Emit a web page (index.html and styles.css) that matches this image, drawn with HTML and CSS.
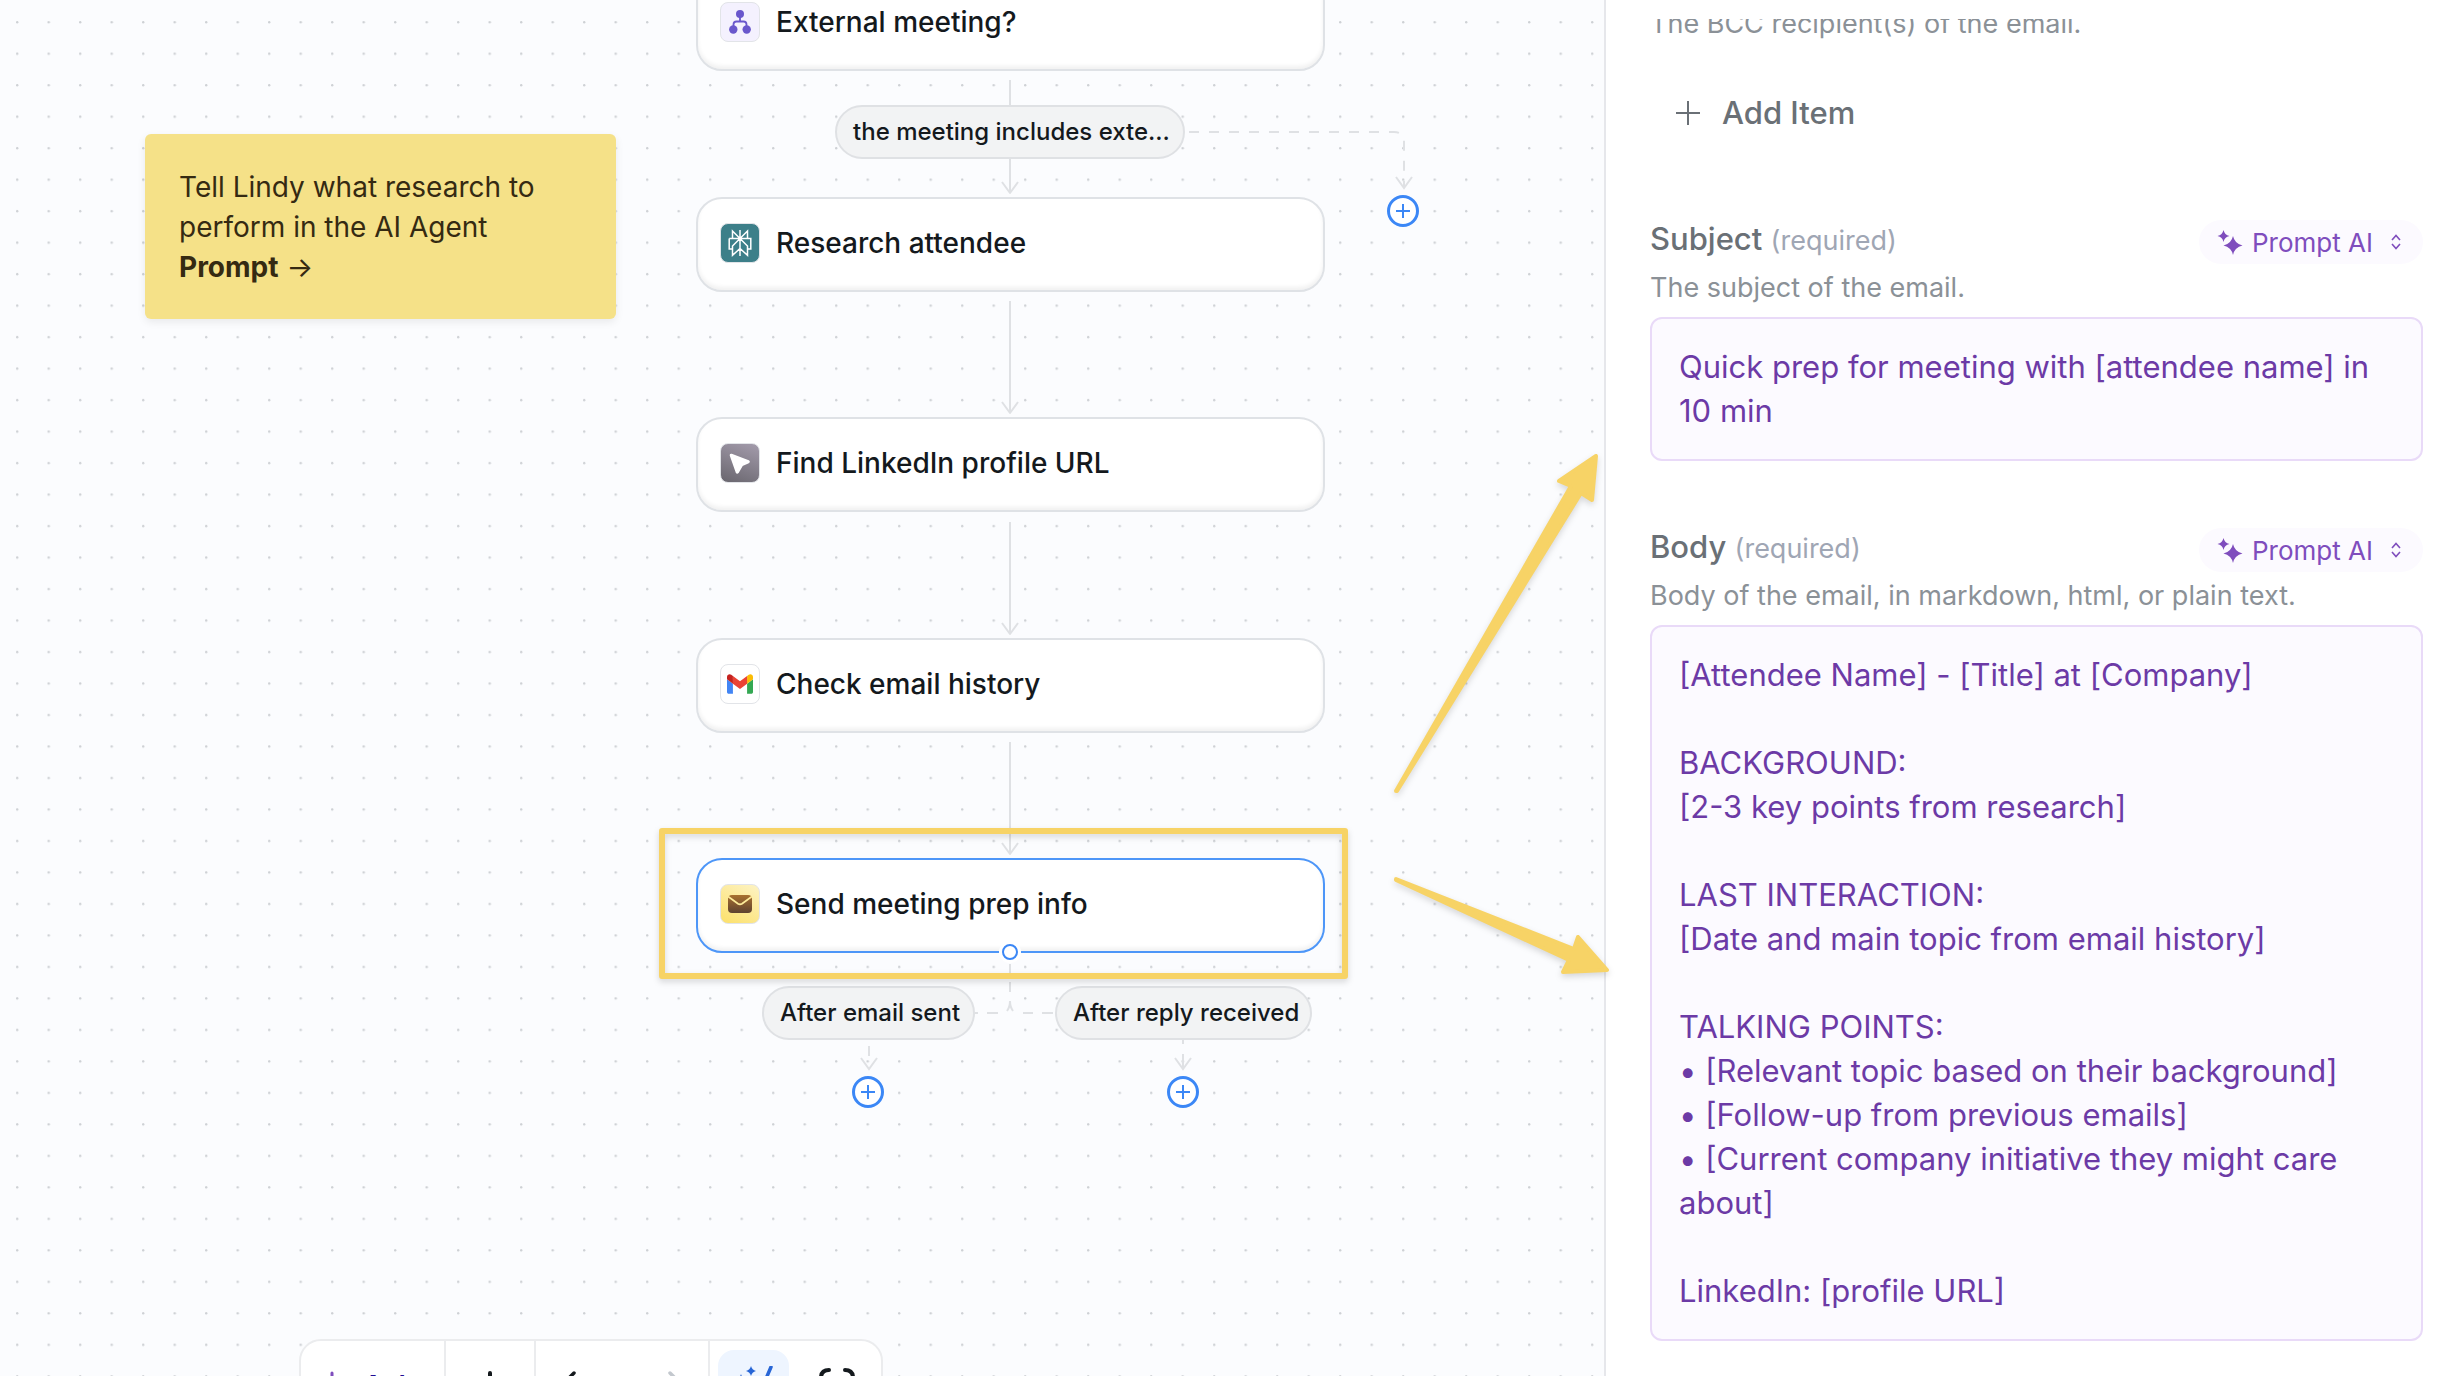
FILE: index.html
```html
<!DOCTYPE html>
<html lang="en">
<head>
<meta charset="utf-8">
<title>Meeting prep workflow</title>
<link rel="stylesheet" href="styles.css">
</head>
<body>
<div class="workspace">
  <main class="canvas">
    <svg class="layer" aria-hidden="true">
      <defs>
        <pattern id="dots" x="16" y="21" width="31.5" height="31.49" patternUnits="userSpaceOnUse">
          <circle cx="1.2" cy="1.2" r="1.2" fill="#cdd0d4"/>
        </pattern>
      </defs>
      <rect width="100%" height="100%" fill="url(#dots)"/>
      <g fill="none" stroke="#dfe1e4" stroke-width="2">
        <path d="M1010 80V193M1010 301V413M1010 522V634M1010 742V854"/>
        <path d="M1002 182l8 11 8-11M1002 402l8 11 8-11M1002 623l8 11 8-11M1002 843l8 11 8-11" stroke-linejoin="round"/>
        <path d="M1189 132H1394Q1404 132 1404 142V187" stroke="#dfe1e4" stroke-dasharray="10 10"/>
        <path d="M1396 177l8 11 8-11M861 1058l8 11 8-11M1175 1058l8 11 8-11" stroke="#dfe1e4"/>
        <path d="M1010 964v9M1010 982v10M1010 1001q0 6-3 10M1010 1001q0 6 3 10M975 1013h3M987 1013h11M1023 1013h10M1042 1013h11M869 1046v10M1183 1040v4M1183 1054v14" stroke="#dfe1e4"/>
      </g>
    </svg>

    <aside class="note">Tell Lindy what research to perform in the AI Agent <strong>Prompt</strong> →</aside>

    <section class="node node-condition">
      <span class="tile tile-branch"><svg width="22" height="24" viewBox="0 0 22 24"><g fill="none" stroke="#6957cc" stroke-width="1.8"><path d="M11 5v6M4.500 18v-3.500Q4.500 11.500 7.500 11.500h7Q17.500 11.500 17.500 14.500V18"/></g><g fill="#6957cc"><circle cx="11" cy="4" r="4"/><circle cx="4.300" cy="19.500" r="4.200"/><circle cx="17.700" cy="19.500" r="4.200"/></g></svg></span>
      <span>External meeting?</span>
    </section>
    <section class="node node-research">
      <span class="tile tile-research"><svg width="24" height="28" viewBox="0 0 24 28" fill="none" stroke="#fff" stroke-width="1.500"><path d="M12 1v26M12 9.500L4.500 2v7.500M12 9.500L19.500 2v7.500M1.200 9.500h21.600v10.500h-3.300M1.200 9.500v10.500h3.300M12 9.500L4.500 17v9.300L12 19.500l7.500 6.800V17z"/></svg></span>
      <span>Research attendee</span>
    </section>
    <section class="node node-linkedin">
      <span class="tile tile-agent"><svg width="24" height="24" viewBox="0 0 24 24"><path d="M3.500 3.500L20.500 10q1.200.7 0 1.500l-6.300 2.800-4.200 7.200q-.8 1-1.500 0L2.500 4.500q-.2-1.200 1-1z" fill="#fff" stroke="#fff" stroke-width="1.500" stroke-linejoin="round"/></svg></span>
      <span>Find LinkedIn profile URL</span>
    </section>
    <section class="node node-history">
      <span class="tile tile-gmail"><svg width="26" height="20" viewBox="52 42 88 66"><path fill="#4285f4" d="M58 108h14V74L52 59v43c0 3.320 2.690 6 6 6"/><path fill="#34a853" d="M120 108h14c3.320 0 6-2.690 6-6V59l-20 15"/><path fill="#fbbc04" d="M120 48v26l20-15v-8c0-7.420-8.470-11.650-14.400-7.200"/><path fill="#ea4335" d="M72 74V48l24 18 24-18v26L96 92"/><path fill="#c5221f" d="M52 51v8l20 15V48l-5.600-4.200c-5.940-4.450-14.400-.22-14.400 7.200"/></svg></span>
      <span>Check email history</span>
    </section>
    <section class="node node-send">
      <span class="tile tile-mail"><svg width="24" height="18" viewBox="0 0 24 18"><defs><linearGradient id="env" x1="0" y1="0" x2="0" y2="1"><stop offset="0" stop-color="#a8702f"/><stop offset="1" stop-color="#5e4230"/></linearGradient></defs><rect width="24" height="18" rx="4" fill="url(#env)"/><path d="M0 1.500l10 7.200q2 1.300 4 0L24 1.500" fill="none" stroke="#fdeb9a" stroke-width="1.800"/></svg></span>
      <span>Send meeting prep info</span>
    </section>
    <span class="port"></span>

    <span class="pill pill-external">the meeting includes exte...</span>
    <span class="pill pill-sent">After email sent</span>
    <span class="pill pill-reply">After reply received</span>

    <button class="add add-else" aria-label="Add step"><svg width="16" height="16" viewBox="0 0 16 16"><path d="M8 1v14M1 8h14" stroke="#3b87f6" stroke-width="2"/></svg></button>
    <button class="add add-sent" aria-label="Add step"><svg width="16" height="16" viewBox="0 0 16 16"><path d="M8 1v14M1 8h14" stroke="#3b87f6" stroke-width="2"/></svg></button>
    <button class="add add-reply" aria-label="Add step"><svg width="16" height="16" viewBox="0 0 16 16"><path d="M8 1v14M1 8h14" stroke="#3b87f6" stroke-width="2"/></svg></button>

    <div class="highlight"></div>

    <div class="toolbar">
      <button class="tool tool-ask"><svg width="24" height="30" viewBox="0 0 24 30"><path d="M12 2v26M2 15h20" stroke="#7f4dbd" stroke-width="3" stroke-linecap="round"/></svg>Ask</button>
      <button class="tool tool-new" aria-label="Add"><svg width="30" height="30" viewBox="0 0 30 30"><path d="M15 2v26M2 15h26" stroke="#14191d" stroke-width="4" stroke-linecap="round"/></svg></button>
      <div class="tool-group history">
        <button class="tool" aria-label="Undo"><svg width="30" height="30" viewBox="0 0 30 30" fill="none" stroke="#14191d" stroke-width="3.500" stroke-linecap="round"><path d="M11 2L3 10l8 8M3 10h15a8 8 0 0 1 0 16h-5"/></svg></button>
        <button class="tool" aria-label="Redo" disabled><svg width="30" height="30" viewBox="0 0 30 30" fill="none" stroke="#c3c8ce" stroke-width="3.500" stroke-linecap="round"><path d="M19 2l8 8-8 8M27 10H12a8 8 0 0 0 0 16h5"/></svg></button>
      </div>
      <div class="tool-group view">
        <button class="tool active" aria-label="Tidy up"><svg width="40" height="40" viewBox="0 0 40 40"><path d="M17 0q1 4 5 5-4 1-5 5-1-4-5-5 4-1 5-5zM7 8q1 4 5 5-4 1-5 5-1-4-5-5 4-1 5-5z" fill="#2866d6"/><path d="M37 1L25 29" stroke="#2866d6" stroke-width="3.500" stroke-linecap="round"/></svg></button>
        <button class="tool" aria-label="Fit view"><svg width="40" height="40" viewBox="0 0 40 40" fill="none" stroke="#14191d" stroke-width="4" stroke-linecap="round"><path d="M12 4q-8 0-8 8M28 4q8 0 8 8M12 36q-8 0-8-8M28 36q8 0 8-8"/></svg></button>
      </div>
    </div>
  </main>

  <aside class="panel">
    <form class="scroll">
      <p class="help bcc">The BCC recipient(s) of the email.</p>
      <button type="button" class="add-item"><svg width="24" height="24" viewBox="0 0 24 24"><path d="M12 0v24M0 12h24" stroke="#6a7076" stroke-width="2"/></svg>Add Item</button>

      <div class="field">
        <div class="field-head">
          <label for="subject">Subject <small>(required)</small></label>
          <button type="button" class="chip"><svg width="26" height="26" viewBox="0 0 26 26"><path d="M6.500 1q1 4.800 6 6-5 1.200-6 6-1-4.800-6-6 5-1.200 6-6zM16 7q1.600 7.600 9.500 9.500-7.900 1.900-9.500 9.500-1.600-7.600-9.500-9.500 7.900-1.900 9.500-9.500z" fill="#7f4dbd"/></svg><span>Prompt AI</span><svg class="carets" width="10" height="16" viewBox="0 0 10 16" fill="none" stroke="#7f4dbd" stroke-width="1.600"><path d="M1 6l4-4.500L9 6M1 10l4 4.500L9 10"/></svg></button>
        </div>
        <p class="help">The subject of the email.</p>
        <textarea id="subject" rows="2" spellcheck="false">Quick prep for meeting with [attendee name] in 10 min</textarea>
      </div>

      <div class="field">
        <div class="field-head">
          <label for="body">Body <small>(required)</small></label>
          <button type="button" class="chip"><svg width="26" height="26" viewBox="0 0 26 26"><path d="M6.500 1q1 4.800 6 6-5 1.200-6 6-1-4.800-6-6 5-1.200 6-6zM16 7q1.600 7.600 9.500 9.500-7.900 1.900-9.500 9.500-1.600-7.600-9.500-9.500 7.900-1.900 9.500-9.500z" fill="#7f4dbd"/></svg><span>Prompt AI</span><svg class="carets" width="10" height="16" viewBox="0 0 10 16" fill="none" stroke="#7f4dbd" stroke-width="1.600"><path d="M1 6l4-4.500L9 6M1 10l4 4.500L9 10"/></svg></button>
        </div>
        <p class="help">Body of the email, in markdown, html, or plain text.</p>
        <textarea id="body" rows="15" spellcheck="false">[Attendee Name] - [Title] at [Company]

BACKGROUND:
[2-3 key points from research]

LAST INTERACTION:
[Date and main topic from email history]

TALKING POINTS:
• [Relevant topic based on their background]
• [Follow-up from previous emails]
• [Current company initiative they might care about]

LinkedIn: [profile URL]</textarea>
      </div>
    </form>
  </aside>

  <svg class="layer arrows" aria-hidden="true">
    <g fill="#f7d366" stroke="#f7d366" stroke-width="4" stroke-linejoin="round">
      <path d="M1396 791L1571 486 1559 481 1596 456 1592 500 1581 493 1397 791z"/>
      <path d="M1396 879L1574 949 1578 937 1607 970 1563 972 1569 960 1396 880z"/>
    </g>
  </svg>
</div>
</body>
</html>
```
FILE: styles.css
```css
* { box-sizing: border-box; }

body {
  margin: 0;
  font-family: Inter, "Liberation Sans", sans-serif;
  color: #14191d;
  background: #fff;
}

button, textarea { font: inherit; }
button { border: 0; background: none; padding: 0; cursor: pointer; }
p { margin: 0; }
svg { display: block; flex: none; }

.workspace {
  position: relative;
  display: grid;
  grid-template-columns: minmax(0, 1fr) 844px;
  height: 100vh;
  overflow: hidden;
}

/* Canvas */
.canvas {
  position: relative;
  overflow: hidden;
  background: #fbfcfe;
}

.layer {
  position: absolute;
  inset: 0;
  width: 100%;
  height: 100%;
  pointer-events: none;
}

.arrows { filter: drop-shadow(0 3px 3px rgba(0, 0, 0, 0.15)); }

.note {
  position: absolute;
  left: 145px;
  top: 134px;
  width: 471px;
  padding: 33px 34px 32px;
  font-size: 28px;
  line-height: 40px;
  color: #352a12;
  background: #f5e188;
  border-radius: 6px;
  box-shadow: 0 3px 8px rgba(0, 0, 0, 0.08);
}

.node {
  position: absolute;
  left: 696px;
  width: 629px;
  height: 95px;
  display: flex;
  align-items: center;
  gap: 16px;
  padding: 0 22px 4px;
  font-size: 28px;
  line-height: 40px;
  font-weight: 500;
  background: #fff;
  border: 2px solid #dfe2e6;
  border-radius: 26px;
  box-shadow: inset 0 -3px 4px rgba(0, 0, 0, 0.06);
}

.node-condition { top: -24px; }
.node-research { top: 197px; }
.node-linkedin { top: 417px; }
.node-history { top: 638px; }
.node-send { top: 858px; border-color: #4d96f8; }

.tile {
  flex: none;
  display: grid;
  place-items: center;
  width: 40px;
  height: 40px;
  border: 1px solid #e2e4e8;
  border-radius: 8px;
  background: #fff;
}

.tile-branch { background: #f4f1fe; }
.tile-research { background: #3d7f89; }
.tile-agent { background: linear-gradient(20deg, #69666e, #a49cac); }
.tile-mail { background: linear-gradient(30deg, #fce06a, #fdf3c4); }

.port {
  position: absolute;
  left: 1002px;
  top: 944px;
  width: 16px;
  height: 16px;
  border: 2px solid #3b87f6;
  border-radius: 50%;
  background: #fff;
  box-shadow: 0 0 0 3px #fff;
}

.pill {
  position: absolute;
  padding: 7px 16px;
  font-size: 24px;
  line-height: 36px;
  font-weight: 500;
  white-space: nowrap;
  text-align: center;
  background: #f2f3f4;
  border: 2px solid #dfe1e4;
  border-radius: 27px;
}

.pill-external { left: 835px; top: 105px; width: 350px; }
.pill-sent { left: 762px; top: 986px; width: 213px; }
.pill-reply { left: 1055px; top: 986px; width: 257px; }

.add {
  position: absolute;
  display: grid;
  place-items: center;
  width: 32px;
  height: 32px;
  border: 3px solid #3b87f6;
  border-radius: 50%;
  background: #fff;
}

.add-else { left: 1387px; top: 195px; }
.add-sent { left: 852px; top: 1076px; }
.add-reply { left: 1167px; top: 1076px; }

.highlight {
  position: absolute;
  left: 659px;
  top: 828px;
  width: 689px;
  height: 151px;
  border: 6px solid #f7d366;
  border-radius: 3px;
  filter: drop-shadow(0 3px 3px rgba(0, 0, 0, 0.15));
}

/* Toolbar hangs over the bottom edge of the canvas */
.toolbar {
  position: absolute;
  left: 299px;
  bottom: -56px;
  display: flex;
  width: 584px;
  height: 93px;
  background: #fff;
  border: 2px solid #ebecee;
  border-radius: 22px;
}

.tool {
  display: flex;
  align-items: center;
  justify-content: center;
  color: #1f0c94;
  font-size: 28px;
  font-weight: 600;
}

.tool-ask {
  justify-content: flex-start;
  gap: 19px;
  width: 145px;
  padding-left: 19px;
  border-right: 2px solid #ebecee;
}
.tool-new { width: 90px; border-right: 2px solid #ebecee; }
.tool-group { display: flex; align-items: center; }
.history { width: 174px; justify-content: space-between; padding: 0 27px; border-right: 2px solid #ebecee; }
.view { flex: 1; gap: 28px; padding-left: 8px; }
.active { width: 71px; height: 71px; border-radius: 16px; background: #eef5ff; }

/* Settings panel */
.panel {
  padding: 19px 25px 0 44px;
  background: #fff;
  border-left: 2px solid #e6e7eb;
  font-optical-sizing: none;
}

.scroll {
  height: 100%;
  overflow: hidden;
}

.help {
  font-size: 27px;
  line-height: 32px;
  color: #8b9197;
}

.bcc { margin-top: -11px; }

.add-item {
  display: flex;
  align-items: center;
  gap: 22px;
  margin-top: 51px;
  padding-left: 26px;
  font-size: 31px;
  line-height: 44px;
  font-weight: 500;
  color: #6a7076;
}

.field { margin-top: 67px; }
.add-item + .field { margin-top: 85px; }

.field-head {
  display: flex;
  justify-content: space-between;
  align-items: flex-start;
  margin-bottom: 8px;
}

.field-head label {
  font-size: 31px;
  line-height: 38px;
  font-weight: 500;
  color: #6a7076;
}

.field-head small {
  font-size: 27px;
  font-weight: 400;
  color: #9fa6b4;
}

.chip {
  display: flex;
  align-items: center;
  gap: 9px;
  width: 224px;
  height: 44px;
  padding: 0 22px 0 18px;
  font-size: 26px;
  color: #7f4dbd;
  background: #fcfaff;
  border-radius: 22px;
}

.carets { margin-left: auto; }

textarea {
  display: block;
  width: 100%;
  margin-top: 13px;
  padding: 26px 27px;
  font-size: 31px;
  line-height: 44px;
  color: #6c3aa6;
  background: #fcfaff;
  border: 2px solid #e9daf8;
  border-radius: 12px;
  outline: 0;
  resize: none;
  overflow: hidden;
}
```
